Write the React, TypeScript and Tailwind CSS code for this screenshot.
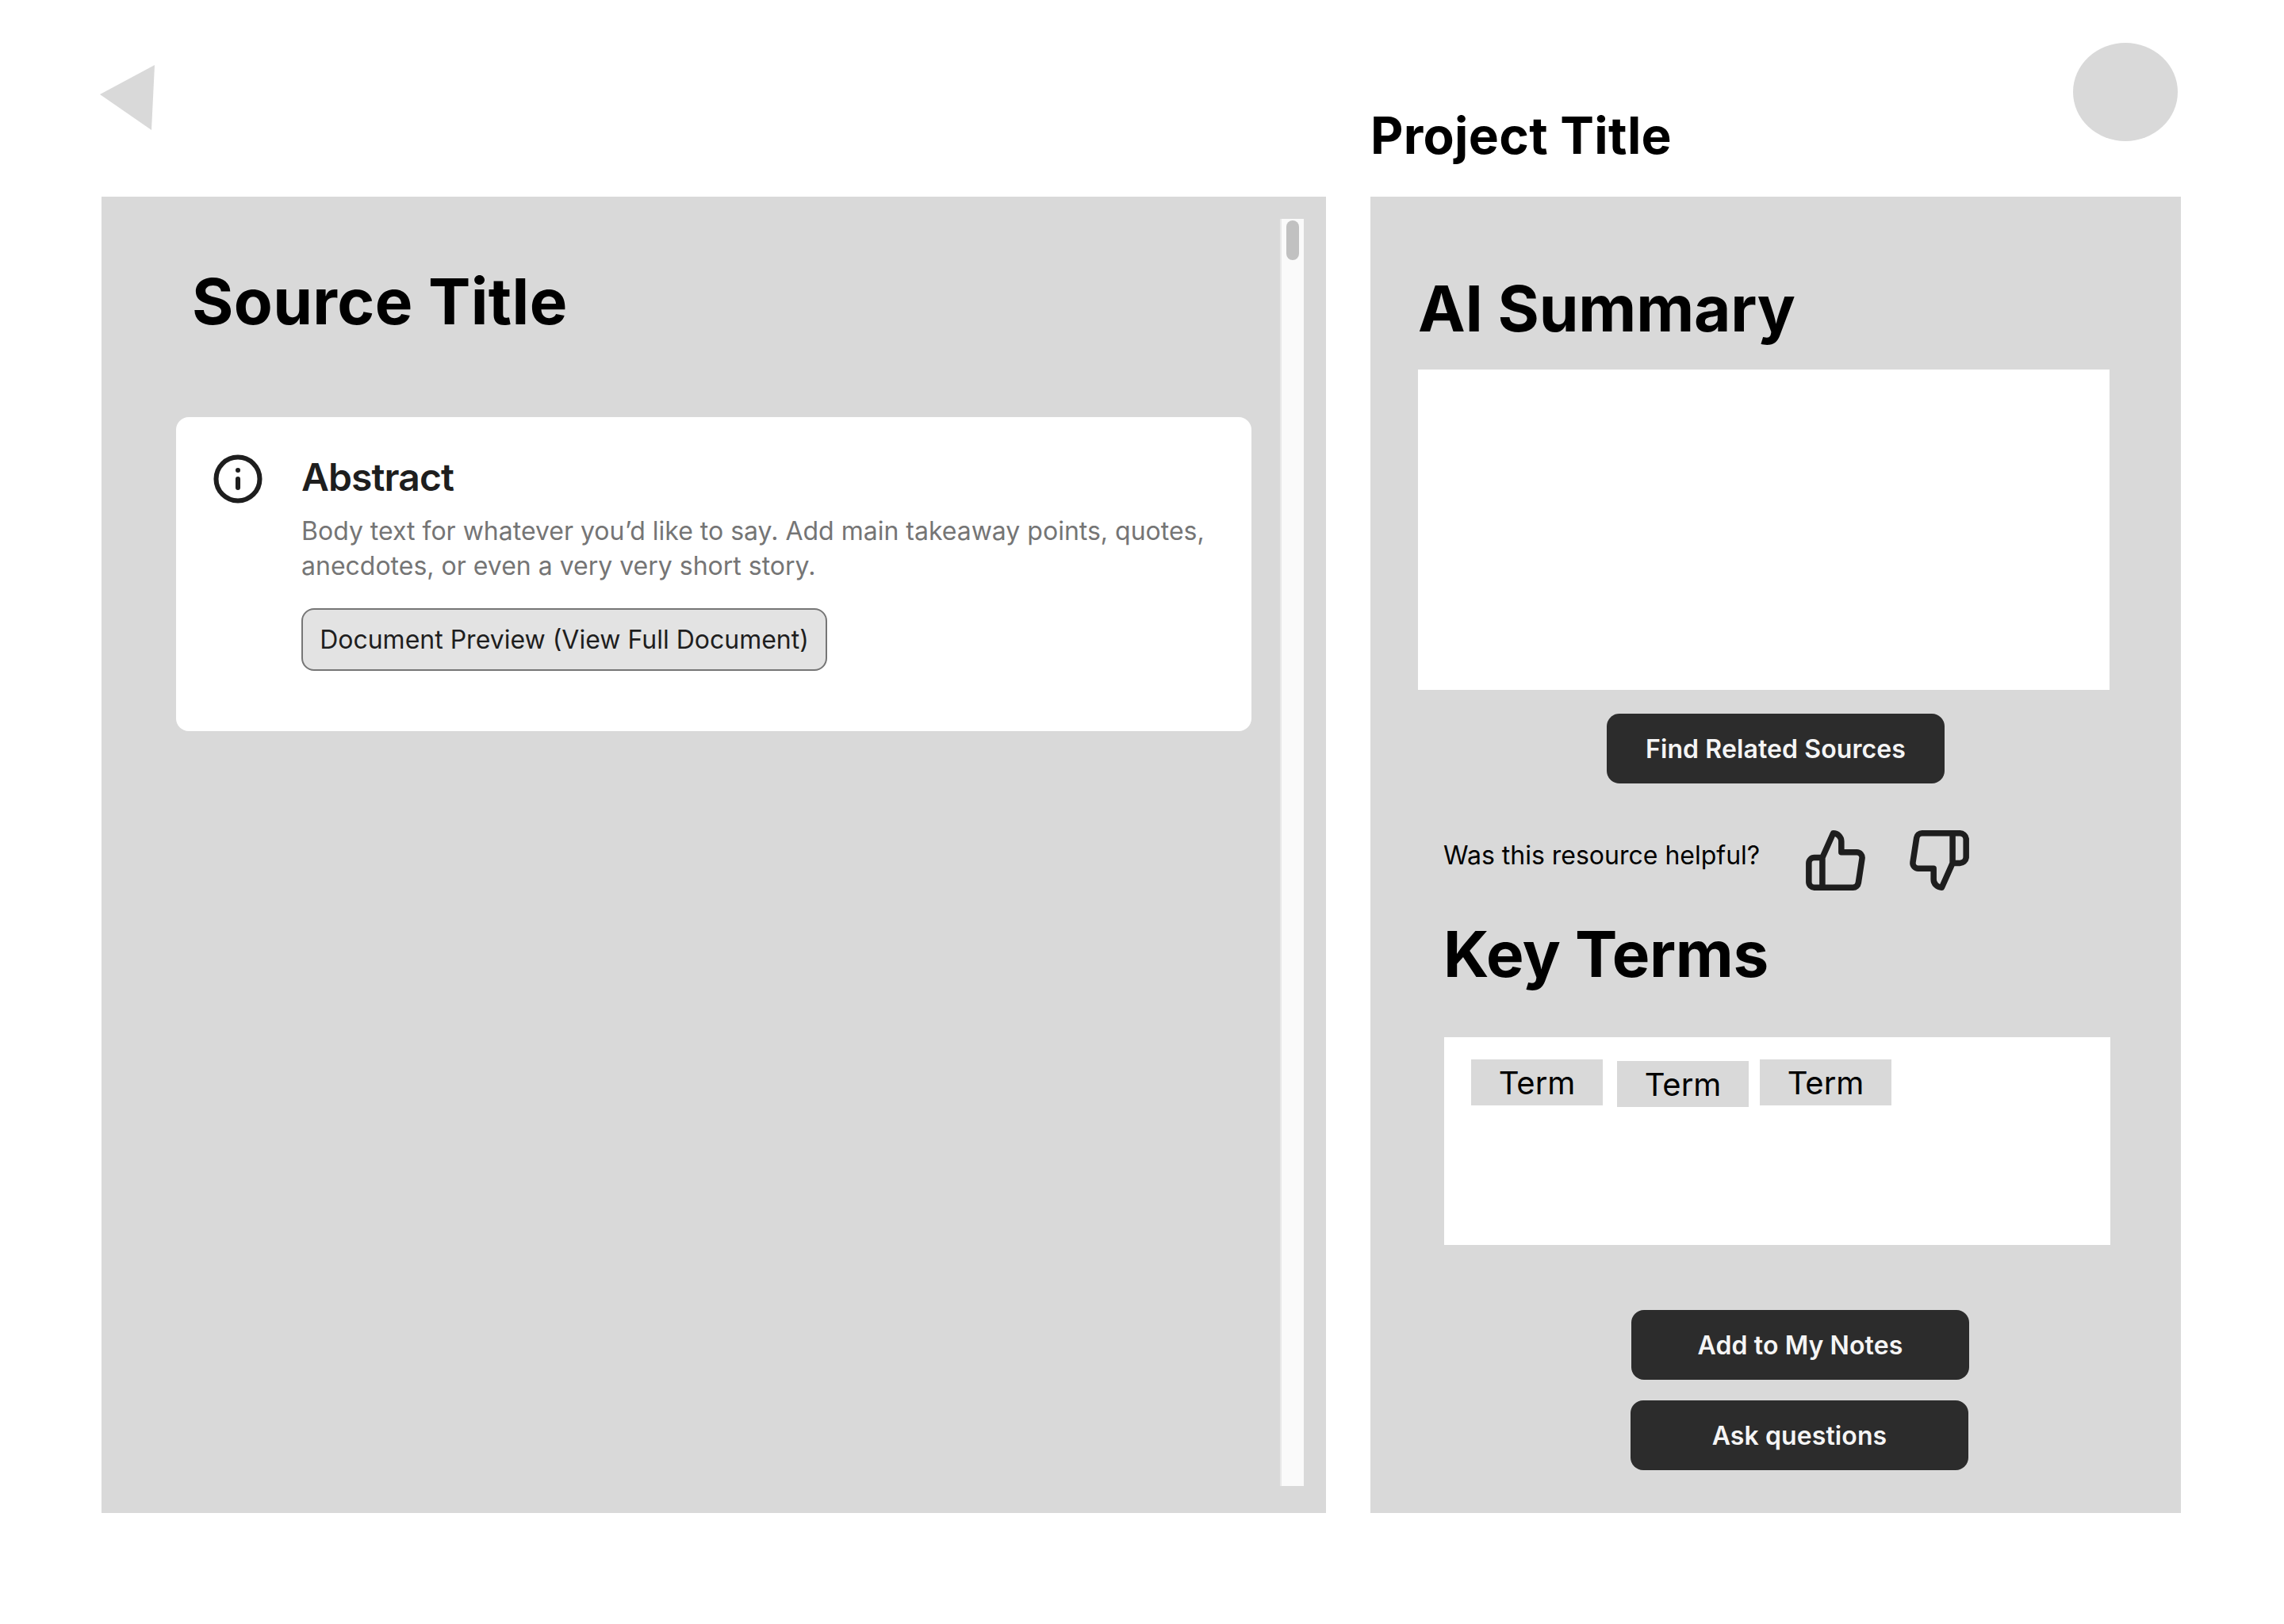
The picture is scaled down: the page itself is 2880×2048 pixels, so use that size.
import React from "react";

function ThumbUp() {
  return (
    <svg width="82" height="82" viewBox="0 0 24 24" fill="none" stroke="#1e1e1e" strokeWidth="2.2" strokeLinecap="round" strokeLinejoin="round" className="shrink-0">
      <path d="M14 9V5a3 3 0 0 0-3-3l-4 9v11h11.28a2 2 0 0 0 2-1.7l1.38-9a2 2 0 0 0-2-2.3zM7 22H4a2 2 0 0 1-2-2v-7a2 2 0 0 1 2-2h3" />
    </svg>
  );
}

function ThumbDown() {
  return (
    <svg width="82" height="82" viewBox="0 0 24 24" fill="none" stroke="#1e1e1e" strokeWidth="2.2" strokeLinecap="round" strokeLinejoin="round" className="shrink-0">
      <path d="M10 15v4a3 3 0 0 0 3 3l4-9V2H5.72a2 2 0 0 0-2 1.7l-1.38 9a2 2 0 0 0 2 2.3zm7-13h2.67A2.31 2.31 0 0 1 22 4v7a2.31 2.31 0 0 1-2.33 2H17" />
    </svg>
  );
}

function InfoIcon() {
  return (
    <svg width="66" height="66" viewBox="0 0 24 24" fill="none" stroke="#1e1e1e" strokeWidth="2.2" strokeLinecap="round" strokeLinejoin="round" className="shrink-0">
      <circle cx="12" cy="12" r="10" />
      <path d="M12 16v-4" />
      <path d="M12 8h.01" />
    </svg>
  );
}

function DarkButton({ label, className }: { label: string; className: string }) {
  return (
    <div className={`flex h-[88px] w-[426px] items-center justify-center rounded-[16px] bg-[#2c2c2c] pt-[2px] text-[32px] font-semibold tracking-[0.1px] text-[#f5f5f5] ${className}`}>
      {label}
    </div>
  );
}

function Term({ className }: { className: string }) {
  return (
    <div className={`flex h-[58px] w-[166px] items-center justify-center bg-[#d9d9d9] pt-[2px] text-[40px] leading-[48px] text-black ${className}`}>
      Term
    </div>
  );
}

export default function App() {
  return (
    <div className="h-[2048px] w-[2880px] bg-white font-['Inter',sans-serif]">
      <header className="flex h-[248px] items-start pl-[126px]">
        <svg width="69" height="82" viewBox="0 0 69 82" className="mt-[82px] shrink-0">
          <polygon points="0,37 69,0 65,82" fill="#d9d9d9" />
        </svg>
        <h1 className="ml-[1533px] mt-[131px] shrink-0 text-[64px] font-bold leading-[80px] tracking-[0.3px] text-black">Project Title</h1>
        <div className="ml-[506px] mt-[54px] h-[124px] w-[132px] shrink-0 rounded-[50%] bg-[#d9d9d9]" />
      </header>

      <main className="flex gap-[56px] pl-[128px]">
        <section className="flex h-[1660px] w-[1544px] items-start bg-[#d9d9d9] pl-[94px] pt-[28px]">
          <div className="w-[1356px] shrink-0">
            <h2 className="ml-[20px] mt-[56px] text-[80px] font-bold leading-[96px] tracking-[0.35px] text-black">Source Title</h2>
            <div className="mt-[98px] flex h-[396px] rounded-[16px] bg-white pl-[45px] pt-[45px]">
              <InfoIcon />
              <div className="ml-[47px]">
                <h3 className="mt-[2px] text-[48px] font-semibold leading-[58px] tracking-[-0.9px] text-[#1e1e1e]">Abstract</h3>
                <p className="mt-[17px] w-[1170px] text-[32px] leading-[44px] text-[#757575]">
                  Body text for whatever you’d like to say. Add main takeaway points, quotes, anecdotes, or even a very very short story.
                </p>
                <div className="mt-[31px] flex h-[79px] w-[663px] items-center justify-center rounded-[16px] border-2 border-[#767676] bg-[#e3e3e3] text-[32px] text-[#1e1e1e]">
                  Document Preview (View Full Document)
                </div>
              </div>
            </div>
          </div>
          <div className="ml-[36px] flex h-[1598px] w-[30px] shrink-0 justify-center border-l-2 border-[#e8e8e8] bg-[#fafafa] pt-[2px]">
            <div className="h-[50px] w-[16px] rounded-full bg-[#c1c1c1]" />
          </div>
        </section>

        <section className="h-[1660px] w-[1022px] bg-[#d9d9d9]">
          <h2 className="ml-[60px] mt-[93px] inline-block text-[80px] font-bold leading-[96px] tracking-[-0.2px] text-black">AI Summary</h2>
          <div className="ml-[60px] mt-[29px] h-[404px] w-[872px] bg-white" />
          <DarkButton label="Find Related Sources" className="ml-[298px] mt-[30px]" />
          <div className="ml-[92px] mt-[56px] flex h-[82px] items-center">
            <p className="mb-[12px] w-[454px] text-[32px] leading-[40px] text-black">Was this resource helpful?</p>
            <div className="flex gap-[48px]">
              <ThumbUp />
              <ThumbDown />
            </div>
          </div>
          <h2 className="ml-[92px] mt-[29px] text-[80px] font-bold leading-[96px] tracking-[-0.4px] text-black">Key Terms</h2>
          <div className="ml-[93px] mt-[57px] flex h-[262px] w-[840px] items-start bg-white pl-[34px] pt-[28px]">
            <Term className="" />
            <Term className="ml-[18px] mt-[2px]" />
            <Term className="ml-[14px]" />
          </div>
          <DarkButton label="Add to My Notes" className="ml-[329px] mt-[82px]" />
          <DarkButton label="Ask questions" className="ml-[328px] mt-[26px]" />
        </section>
      </main>
    </div>
  );
}
